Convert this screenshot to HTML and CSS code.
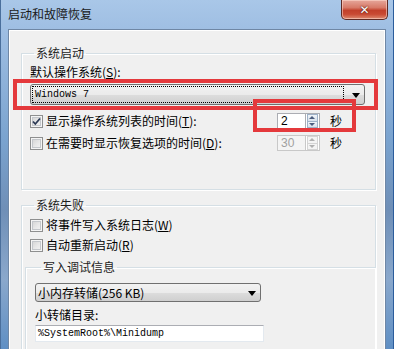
FILE: index.html
```html
<!DOCTYPE html>
<html lang="zh-CN">
<head>
    <meta charset="UTF-8">
    <title>启动和故障恢复</title>
    <link rel="stylesheet" href="styles.css">
</head>
<body>

<div class="window">
    <div class="titlebar">
        <span class="title">启动和故障恢复</span>
        <button class="close-btn">&#x2715;</button>
    </div>

    <div class="client">
        <fieldset class="group">
            <legend>系统启动</legend>
            <div class="field-label">默认操作系统(<u>S</u>):</div>
            <div class="combo combo-os">
                <span class="combo-focus">Windows 7</span>
                <span class="combo-arrow"></span>
            </div>

            <div class="check-row first">
                <label class="check">
                    <span class="box checked">
                        <svg width="11" height="11" viewBox="0 0 11 11"><path d="M2 5.5 L4.3 8 L9 2.5" fill="none" stroke="#2c3a55" stroke-width="1.8"/></svg>
                    </span>
                    显示操作系统列表的时间(<u>T</u>):
                </label>
                <div class="spin-group">
                    <div class="spinner">
                        <span class="spin-value">2</span>
                        <span class="spin-btns"><span class="up"></span><span class="down"></span></span>
                    </div>
                    <span class="unit">秒</span>
                </div>
            </div>

            <div class="check-row">
                <label class="check">
                    <span class="box"></span>
                    在需要时显示恢复选项的时间(<u>D</u>):
                </label>
                <div class="spin-group">
                    <div class="spinner disabled">
                        <span class="spin-value">30</span>
                        <span class="spin-btns"><span class="up"></span><span class="down"></span></span>
                    </div>
                    <span class="unit">秒</span>
                </div>
            </div>
        </fieldset>

        <fieldset class="group group-fail">
            <legend>系统失败</legend>
            <div class="check-row first">
                <label class="check"><span class="box"></span>将事件写入系统日志(<u>W</u>)</label>
            </div>
            <div class="check-row">
                <label class="check"><span class="box"></span>自动重新启动(<u>R</u>)</label>
            </div>

            <fieldset class="group inner">
                <legend>写入调试信息</legend>
                <div class="combo combo-dump">
                    <span class="combo-text">小内存转储(256 KB)</span>
                    <span class="combo-arrow"></span>
                </div>
                <div class="field-label dir-label">小转储目录:</div>
                <div class="textbox">%SystemRoot%\Minidump</div>
            </fieldset>
        </fieldset>
    </div>

    <!-- annotation boxes drawn over the dialog -->
    <div class="mark mark-os"></div>
    <div class="mark mark-time"></div>
</div>

</body>
</html>
```

FILE: styles.css
```css
body {
    margin: 0;
    padding: 0;
    font-family: "Noto Sans CJK SC", "DejaVu Sans", sans-serif;
    font-size: 12px;
    color: #000;
    overflow: hidden;
}

.window {
    position: relative;
    box-sizing: border-box;
    width: 394px;
    height: 349px;
    padding: 0 8px;
    display: flex;
    flex-direction: column;
    background: linear-gradient(180deg, #a9c7e8 0%, #9dbde2 10%, #7aa3cf 40%, #6f8fb7 60%, #8aa8cc 80%, #5f8fc4 100%);
    box-shadow: inset 1px 0 #4a6f9c, inset -1px 0 #2c5d9c;
}

.titlebar {
    height: 29px;
    display: flex;
    align-items: flex-start;
    flex-shrink: 0;
}

.title {
    margin-top: 7px;
    line-height: 14px;
    color: #1a1a1a;
}

.close-btn {
    margin-left: auto;
    margin-right: -2px;
    width: 47px;
    height: 20px;
    padding: 0;
    border: 1px solid #5e2a24;
    border-top: none;
    border-radius: 0 0 5px 5px;
    background: linear-gradient(180deg, #e6a79b 0%, #d77a68 40%, #c2402b 55%, #c94a33 75%, #dd8a70 100%);
    box-shadow: inset 0 0 0 1px rgba(255, 220, 210, 0.55);
    color: #fff;
    font-family: "DejaVu Sans", sans-serif;
    font-size: 12px;
    font-weight: bold;
    line-height: 18px;
    text-shadow: 0 0 2px #5a1a10, 0 0 1px #5a1a10;
}

.client {
    flex: 1;
    background: #f0f0f0;
    border: 1px solid #6f87a5;
    border-bottom: none;
    box-shadow: inset 1px 1px #ffffff, inset -1px 0 #ffffff;
    padding-top: 16px;
}

.group {
    margin: 0 9px 0 12px;
    padding: 5px 0 38px 8px;
    border: 1px solid #d5dfe5;
    box-shadow: inset 1px 1px #fff, 1px 1px #fff;
}

.group legend {
    margin-left: 4px;
    padding: 0 2px;
    line-height: 14px;
    color: #1e1e1e;
}

.group-fail {
    margin-top: 8px;
    padding-bottom: 10px;
}

.group.inner {
    margin: 7px 0 0 -5px;
    padding: 9px 0 12px 9px;
    border-right: none;
    border-bottom: none;
}

.group.inner legend {
    margin-left: 6px;
}

.field-label {
    line-height: 14px;
}

u {
    text-decoration: underline;
}

/* drop-down lists */
.combo {
    position: relative;
    box-sizing: border-box;
    display: flex;
    align-items: center;
    border: 1px solid #707070;
    border-radius: 3px;
    background: linear-gradient(180deg, #f2f2f2 0%, #ebebeb 50%, #dddddd 51%, #cfcfcf 100%);
}

.combo-os {
    height: 21px;
    margin-top: 5px;
    width: 335px;
    padding: 0 1px;
}

.combo-focus {
    flex: 1;
    height: 15px;
    line-height: 15px;
    padding-left: 2px;
    margin-right: 19px;
    border: 1px dotted #000;
    font-family: "Liberation Mono", monospace;
    font-size: 10px;
    letter-spacing: 0;
}

.combo-arrow {
    position: absolute;
    right: 4px;
    top: 50%;
    margin-top: -2px;
    border-left: 4px solid transparent;
    border-right: 4px solid transparent;
    border-top: 5px solid #000;
}

.combo-dump {
    width: 226px;
    height: 19px;
    padding-left: 2px;
}

.combo-text {
    line-height: 15px;
}

.dir-label {
    margin-top: 6px;
}

.textbox {
    box-sizing: border-box;
    width: 229px;
    height: 17px;
    margin-top: 3px;
    padding-left: 2px;
    border: 1px solid #e3e9ef;
    border-top-color: #abadb3;
    background: #fff;
    font-family: "Liberation Mono", monospace;
    font-size: 10px;
    line-height: 15px;
}

/* checkbox rows */
.check-row {
    display: flex;
    align-items: center;
    height: 16px;
    margin-top: 6px;
}

.check-row.first {
    margin-top: 8px;
}

.group-fail .check-row {
    margin-top: 4px;
}

.group-fail .check-row.first {
    margin-top: 0;
}

.check {
    flex: 1;
    display: flex;
    align-items: center;
    line-height: 14px;
}

.box {
    box-sizing: border-box;
    width: 13px;
    height: 13px;
    margin-right: 3px;
    border: 1px solid #8e8f8f;
    background: linear-gradient(135deg, #cfcfcf 0%, #e8e8e8 55%, #f6f6f6 100%);
    box-shadow: inset 0 0 0 1px #f4f4f4, inset 0 0 0 2px #c4c7cb;
    display: flex;
    align-items: center;
    justify-content: center;
}

.box svg {
    display: block;
}

/* numeric spinners */
.spin-group {
    display: flex;
    align-items: center;
    gap: 10px;
    padding-right: 33px;
}

.spinner {
    display: flex;
    height: 16px;
}

.spin-value {
    box-sizing: border-box;
    width: 28px;
    padding-left: 3px;
    border: 1px solid #abadb3;
    border-right: none;
    background: #fff;
    font-family: "Liberation Sans", Arial, sans-serif;
    font-size: 12px;
    line-height: 14px;
}

.spin-btns {
    width: 15px;
    display: flex;
    flex-direction: column;
    border: 1px solid #abadb3;
    box-sizing: border-box;
    background: #fff;
}

.spin-btns span {
    flex: 1;
    position: relative;
    border: 1px solid #9fb2c8;
    margin: 0 1px;
    background: linear-gradient(180deg, #f0f4f9, #d8e1ec);
}

.spin-btns .up {
    border-bottom: none;
}

.spin-btns .up::after,
.spin-btns .down::after {
    content: "";
    position: absolute;
    left: 50%;
    margin-left: -3px;
    border-left: 3px solid transparent;
    border-right: 3px solid transparent;
}

.spin-btns .up::after {
    top: 1px;
    border-bottom: 3px solid #4b5d7e;
}

.spin-btns .down::after {
    top: 1px;
    border-top: 3px solid #4b5d7e;
}

.spinner.disabled .spin-value {
    color: #a0a0a0;
    border-color: #c8c8c8;
    background: #f4f4f4;
}

.spinner.disabled .spin-btns {
    border-color: #c8c8c8;
}

.spinner.disabled .spin-btns span {
    border-color: #d4d4d4;
    background: #f4f4f4;
}

.spinner.disabled .spin-btns .up::after {
    border-bottom-color: #b0b0b0;
}

.spinner.disabled .spin-btns .down::after {
    border-top-color: #b0b0b0;
}

.unit {
    line-height: 14px;
}

/* red annotation frames */
.mark {
    position: absolute;
    border: 4px solid #e4393c;
    box-sizing: border-box;
}

.mark-os {
    left: 13px;
    top: 79px;
    width: 365px;
    height: 31px;
}

.mark-time {
    left: 253px;
    top: 99px;
    width: 103px;
    height: 33px;
}
```
